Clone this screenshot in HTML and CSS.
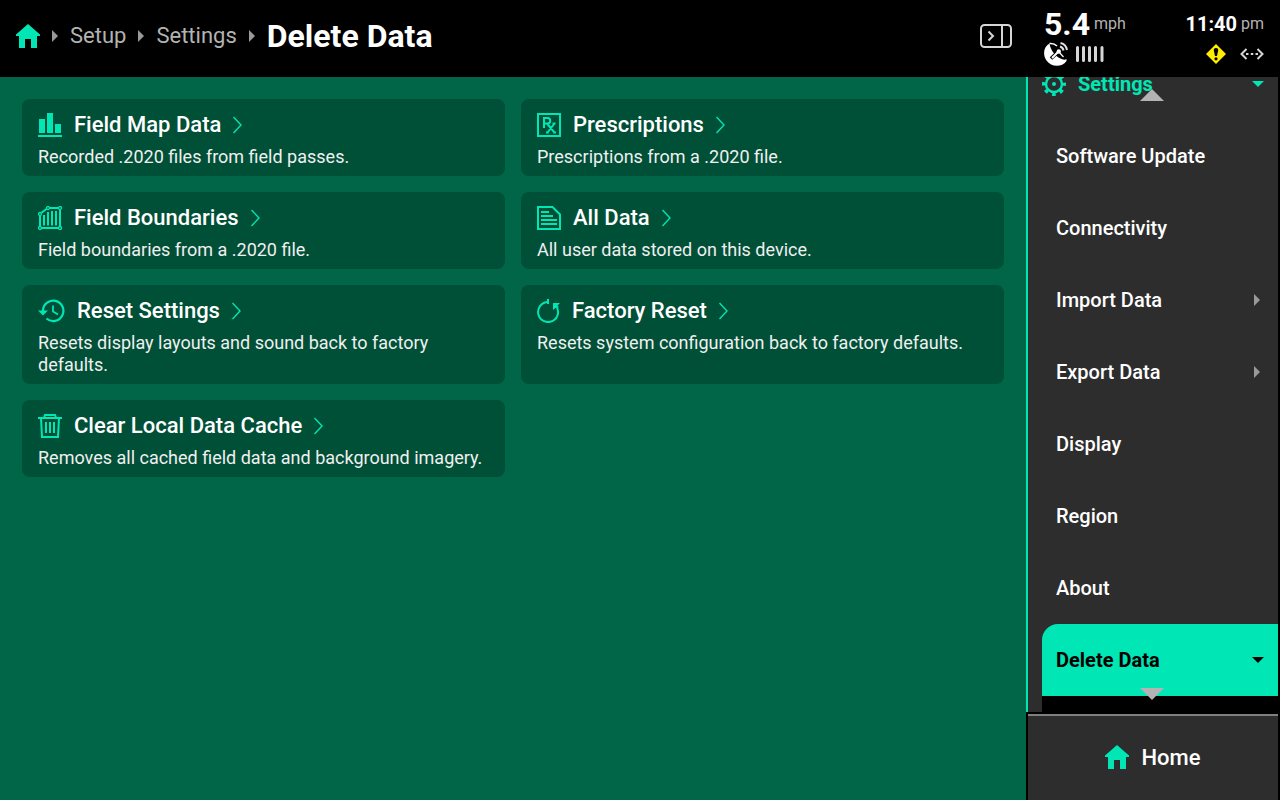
FILE: index.html
```html
<!DOCTYPE html>
<html lang="en">

<head>
    <meta charset="UTF-8">
    <meta name="viewport" content="width=device-width, initial-scale=1.0">
    <title>Delete Data</title>
    <link rel="stylesheet" href="styles.css">
</head>

<body>
    <!-- shared icons -->
    <svg class="defs" aria-hidden="true">
        <symbol id="home" viewBox="0 0 24 24">
            <path d="M12 0L24 10.500V12H21V24H15V15H9V24H3V12H0V10.500Z" fill="currentColor" />
        </symbol>
        <symbol id="chevron" viewBox="0 0 10 18">
            <path d="M0.500 1L8 9L0.500 17" fill="none" stroke="currentColor" stroke-width="1.400" />
        </symbol>
        <symbol id="arrow" viewBox="0 0 6 12">
            <path d="M0 0L6 6L0 12Z" fill="currentColor" />
        </symbol>
        <symbol id="caret" viewBox="0 0 12 6">
            <path d="M0 0H12L6 6Z" fill="currentColor" />
        </symbol>
    </svg>

    <header class="header">
        <nav class="breadcrumb" aria-label="Breadcrumb">
            <a href="#" class="crumb-home" aria-label="Home"><svg class="icon"><use href="#home" /></svg></a>
            <svg class="arrow"><use href="#arrow" /></svg>
            <a href="#" class="crumb">Setup</a>
            <svg class="arrow"><use href="#arrow" /></svg>
            <a href="#" class="crumb">Settings</a>
            <svg class="arrow"><use href="#arrow" /></svg>
            <h1 class="page-title">Delete Data</h1>
        </nav>
        <button type="button" class="panel-toggle" aria-label="Toggle side panel">
            <svg width="32" height="24" viewBox="0 0 32 24" fill="none" stroke="#d6d6d6" stroke-width="2">
                <rect x="1" y="1" width="30" height="22" rx="3.500" />
                <path d="M22 1V23M8.500 7.500L13 12L8.500 16.500" />
            </svg>
        </button>
        <div class="status">
            <div class="status-row">
                <span class="speed">5.4</span>
                <span class="unit">mph</span>
                <span class="time">11:40</span>
                <span class="unit">pm</span>
            </div>
            <div class="status-row status-icons">
                <svg width="24" height="24" viewBox="0 0 24 24" fill="none">
                    <path d="M5.500 1.500C-0.500 4.500-1.500 13 2.500 18.500C7 25 17.500 26 22.500 19V17Q20 18.500 16.500 16.500C11 14 6.500 8 5.500 1.500Z" fill="#fff" />
                    <path d="M5.500 1.500Q10 1 13 4" stroke="#fff" stroke-width="1.600" />
                    <path d="M7 16.500L14.500 9.500" stroke="#000" stroke-width="3.600" />
                    <path d="M8 16L14.500 9.500" stroke="#fff" stroke-width="2" />
                    <path d="M14.500 9.500L19.500 15" stroke="#fff" stroke-width="1.200" />
                    <circle cx="14.800" cy="9.500" r="2.200" fill="#fff" />
                    <path d="M16 4.500A5 5 0 0 1 19.500 8.500M16.500 1A8.500 8.500 0 0 1 23 8" stroke="#e0e0e0" stroke-width="2" />
                </svg>
                <svg width="28" height="16" viewBox="0 0 28 16">
                    <path d="M1.500 1.500V14.500M7.500 1.500V14.500M13.500 1.500V14.500M19.500 1.500V14.500M26 1.500V14.500" stroke="#d6d6d6" stroke-width="3" stroke-linecap="round" />
                </svg>
                <svg class="warning" width="20" height="20" viewBox="0 0 20 20">
                    <path d="M10 0L20 10L10 20L0 10Z" fill="#ffee00" />
                    <path d="M7.700 6Q7.700 4 10 4T12.300 6L11 12H9Z" fill="#000" />
                    <circle cx="10" cy="14.800" r="1.600" fill="#000" />
                </svg>
                <svg width="24" height="12" viewBox="0 0 24 12">
                    <path d="M6.500 1L1.500 6L6.500 11M17.500 1L22.500 6L17.500 11" fill="none" stroke="#d6d6d6" stroke-width="2" />
                    <path d="M6 5H8.500V7H6ZM10.800 5H13.300V7H10.800ZM15.500 5H18V7H15.500Z" fill="#d6d6d6" />
                </svg>
            </div>
        </div>
    </header>

    <div class="layout">
        <main class="content">
            <a href="#" class="card">
                <h2 class="card-title">
                    <svg class="icon" viewBox="0 0 24 24">
                        <path d="M1 6H7V20H1ZM9 0H15V20H9ZM17 11H23V20H17ZM0 22H24V24H0Z" fill="currentColor" />
                    </svg>
                    Field Map Data
                    <svg class="chevron"><use href="#chevron" /></svg>
                </h2>
                <p class="card-text">Recorded .2020 files from field passes.</p>
            </a>
            <a href="#" class="card">
                <h2 class="card-title">
                    <svg class="icon" viewBox="0 0 24 24" fill="none" stroke="currentColor" stroke-width="2">
                        <path d="M1 1H23V23H1Z" />
                        <path d="M7 15V5H10.500A2.500 2.500 0 0 1 10.500 10.500H7M10 10.500L17.500 19.500M17.500 10.500L10.500 19.500M9 19.500H12M16 19.500H19M15.500 10.500H18.500" />
                    </svg>
                    Prescriptions
                    <svg class="chevron"><use href="#chevron" /></svg>
                </h2>
                <p class="card-text">Prescriptions from a .2020 file.</p>
            </a>
            <a href="#" class="card">
                <h2 class="card-title">
                    <svg class="icon" viewBox="0 0 24 24" fill="none" stroke="currentColor">
                        <path d="M3.500 6.700L8.500 3M11.500 2H20.500M22 3.500V20.500M20.500 22H3.500M2 20.500V9.500" stroke-width="2" />
                        <path d="M6 9V19.500M10 6V19.500M14 5V19.500M18 5V19.500" stroke-width="2" />
                        <g stroke-width="1.300">
                            <circle cx="2" cy="8" r="1.500" />
                            <circle cx="10" cy="2" r="1.500" />
                            <circle cx="22" cy="2" r="1.500" />
                            <circle cx="2" cy="22" r="1.500" />
                            <circle cx="22" cy="22" r="1.500" />
                        </g>
                    </svg>
                    Field Boundaries
                    <svg class="chevron"><use href="#chevron" /></svg>
                </h2>
                <p class="card-text">Field boundaries from a .2020 file.</p>
            </a>
            <a href="#" class="card">
                <h2 class="card-title">
                    <svg class="icon" viewBox="0 0 24 24" fill="none" stroke="currentColor" stroke-width="2">
                        <path d="M1 1H15.500L23 8.500V23H1ZM4 6H12M4 10H16M4 14H20M4 18H20" />
                    </svg>
                    All Data
                    <svg class="chevron"><use href="#chevron" /></svg>
                </h2>
                <p class="card-text">All user data stored on this device.</p>
            </a>
            <a href="#" class="card">
                <h2 class="card-title">
                    <svg class="icon icon-wide" viewBox="0 0 27 24" fill="none" stroke="currentColor" stroke-width="2.200">
                        <path d="M5 12A10.200 10.200 0 1 1 8.500 19.500" />
                        <path d="M0 11.500H10L5 16.500Z" fill="currentColor" stroke="none" />
                        <path d="M15 6.500V12.500L20 15.500" stroke-width="1.800" />
                    </svg>
                    Reset Settings
                    <svg class="chevron"><use href="#chevron" /></svg>
                </h2>
                <p class="card-text">Resets display layouts and sound back to factory defaults.</p>
            </a>
            <a href="#" class="card">
                <h2 class="card-title">
                    <svg class="icon icon-narrow" viewBox="0 0 23 24" fill="none" stroke="currentColor" stroke-width="2">
                        <path d="M11 0V5" />
                        <path d="M11 3A10 10 0 1 0 18.500 6.300" />
                        <path d="M16 4H23L20.500 6.500L22 8L19 8.500L16 11Z" fill="currentColor" stroke="none" />
                    </svg>
                    Factory Reset
                    <svg class="chevron"><use href="#chevron" /></svg>
                </h2>
                <p class="card-text">Resets system configuration back to factory defaults.</p>
            </a>
            <a href="#" class="card">
                <h2 class="card-title">
                    <svg class="icon" viewBox="0 0 24 24" fill="none" stroke="currentColor" stroke-width="2">
                        <path d="M0 4H24M6 4L7 1H17L18 4M3 4L4 23H20L21 4" />
                        <path d="M8 8V19M12 8V19M16 8V19" />
                    </svg>
                    Clear Local Data Cache
                    <svg class="chevron"><use href="#chevron" /></svg>
                </h2>
                <p class="card-text">Removes all cached field data and background imagery.</p>
            </a>
        </main>

        <aside class="sidebar">
            <nav class="menu" aria-label="Settings">
                <a href="#" class="menu-item menu-parent">
                    <svg class="icon" viewBox="0 0 24 24" fill="none" stroke="currentColor">
                        <circle cx="12" cy="12" r="8" stroke-width="2.400" />
                        <circle cx="12" cy="12" r="10" stroke-width="4" stroke-dasharray="3.600 4.254" stroke-dashoffset="1.800" />
                        <circle cx="12" cy="12" r="2" fill="currentColor" stroke="none" />
                    </svg>
                    Settings
                    <svg class="caret"><use href="#caret" /></svg>
                </a>
                <a href="#" class="menu-item">Software Update</a>
                <a href="#" class="menu-item">Connectivity</a>
                <a href="#" class="menu-item">Import Data <svg class="arrow"><use href="#arrow" /></svg></a>
                <a href="#" class="menu-item">Export Data <svg class="arrow"><use href="#arrow" /></svg></a>
                <a href="#" class="menu-item">Display</a>
                <a href="#" class="menu-item">Region</a>
                <a href="#" class="menu-item">About</a>
                <a href="#" class="menu-item active" aria-current="page">Delete Data <svg class="caret"><use href="#caret" /></svg></a>
                <div class="submenu"></div>
            </nav>
            <!-- scroll hints over the menu -->
            <svg class="scroll-hint scroll-up" viewBox="0 0 24 12"><path d="M0 12H24L12 0Z" fill="#b3b3b3" /></svg>
            <svg class="scroll-hint scroll-down" viewBox="0 0 24 12"><path d="M0 0H24L12 12Z" fill="#b3b3b3" /></svg>
        </aside>

        <a href="#" class="home-link">
            <svg class="icon"><use href="#home" /></svg>
            Home
        </a>
    </div>
</body>

</html>
```
FILE: styles.css
```css
* {
    box-sizing: border-box;
}

body {
    margin: 0;
    height: 100vh;
    display: flex;
    flex-direction: column;
    background: #000;
    color: #fff;
    font-family: Roboto, "Liberation Sans", sans-serif;
}

a {
    color: inherit;
    text-decoration: none;
}

svg {
    flex: none;
}

.defs {
    position: absolute;
    width: 0;
    height: 0;
}

.icon {
    width: 24px;
    height: 24px;
    color: #00e6b4;
}

.icon-wide {
    width: 27px;
}

.icon-narrow {
    width: 23px;
}

.arrow {
    width: 6px;
    height: 12px;
    color: #999;
}

.caret {
    width: 12px;
    height: 6px;
}

/* header */
.header {
    display: flex;
    align-items: center;
    height: 77px;
    flex: none;
}

.breadcrumb {
    flex: 1;
    display: flex;
    align-items: center;
    gap: 12px;
    padding: 0 16px 6px;
}

.crumb-home {
    display: flex;
}

.crumb {
    font-size: 22px;
    line-height: 32px;
    color: #b3b3b3;
}

.page-title {
    margin: 0;
    font-size: 32px;
    line-height: 38px;
    font-weight: 700;
}

.panel-toggle {
    display: flex;
    margin: 0 14px 6px 0;
    padding: 0;
    border: 0;
    background: none;
}

.status {
    width: 254px;
    padding: 0 16px 6px 18px;
}

.status-row {
    display: flex;
    align-items: center;
    gap: 4px;
}

.speed {
    font-size: 32px;
    line-height: 36px;
    font-weight: 700;
}

.unit {
    font-size: 16px;
    color: #b3b3b3;
}

.time {
    margin-left: auto;
    font-size: 20px;
    font-weight: 700;
}

.status-icons {
    gap: 8px;
}

.warning {
    margin: 0 6px 0 auto;
}

/* page */
.layout {
    flex: 1;
    min-height: 0;
    display: grid;
    grid-template-columns: 1fr 254px;
    grid-template-rows: 1fr 88px;
}

.content {
    grid-row: 1 / 3;
    display: grid;
    grid-template-columns: 1fr 1fr;
    align-content: start;
    gap: 16px;
    padding: 22px;
    background: #006647;
}

.card {
    padding: 10px 16px 8px;
    border-radius: 8px;
    background: #004f37;
}

.card-title {
    display: flex;
    align-items: center;
    gap: 12px;
    margin: 0 0 5px;
    font-size: 22px;
    line-height: 32px;
    font-weight: 500;
}

.chevron {
    width: 10px;
    height: 18px;
    color: #00e6b4;
}

.card-text {
    margin: 0;
    font-size: 18px;
    line-height: 22px;
    color: #f0f0f0;
}

/* sidebar */
.sidebar {
    position: relative;
    overflow: hidden;
    border-left: 2px solid #00e6b4;
    border-right: 2px solid #000;
    background: #2d2d2d;
}

.menu {
    display: flex;
    flex-direction: column;
    height: 100%;
    padding-left: 14px;
    margin-top: -29px;
}

.menu-item {
    flex: none;
    display: flex;
    align-items: center;
    height: 72px;
    padding: 0 14px;
    font-size: 20px;
    line-height: 24px;
    font-weight: 500;
}

.menu-item .arrow,
.menu-item .caret {
    margin-left: auto;
}

.menu-item .arrow {
    margin-right: 4px;
}

.menu-parent {
    gap: 12px;
    padding-left: 0;
    color: #00e6b4;
    font-weight: 700;
}

.active {
    border-top-left-radius: 16px;
    background: #00e6b4;
    color: #000;
    font-weight: 700;
}

.submenu {
    flex: none;
    height: 72px;
    background: #000;
}

.scroll-hint {
    position: absolute;
    left: 112px;
    width: 24px;
    height: 12px;
}

.scroll-up {
    top: 12px;
}

.scroll-down {
    bottom: 12px;
}

.home-link {
    display: flex;
    align-items: center;
    justify-content: center;
    gap: 12px;
    margin: 2px 2px 0;
    padding-bottom: 2px;
    border-top: 2px solid #808080;
    background: #2d2d2d;
    font-size: 22px;
    font-weight: 500;
}
```
